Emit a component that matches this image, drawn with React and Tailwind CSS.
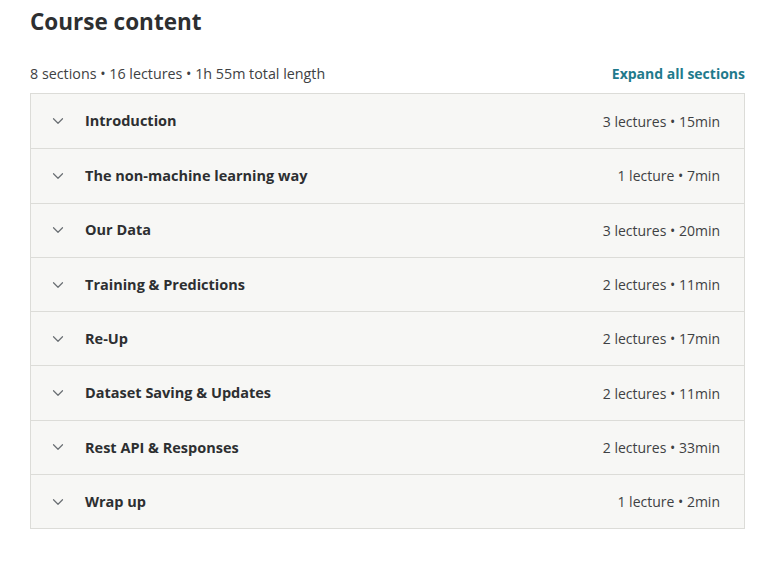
import { ChevronDown } from 'lucide-react';

const sections = [
  { title: 'Introduction', meta: '3 lectures • 15min' },
  { title: 'The non-machine learning way', meta: '1 lecture • 7min' },
  { title: 'Our Data', meta: '3 lectures • 20min' },
  { title: 'Training & Predictions', meta: '2 lectures • 11min' },
  { title: 'Re-Up', meta: '2 lectures • 17min' },
  { title: 'Dataset Saving & Updates', meta: '2 lectures • 11min' },
  { title: 'Rest API & Responses', meta: '2 lectures • 33min' },
  { title: 'Wrap up', meta: '1 lecture • 2min' },
];

const App = () => {
  return (
    <div className="w-[767px] h-[564px] bg-white font-['Open_Sans',sans-serif] text-[#2d2f31]">
      <div className="pl-[30px] pr-[22px] pt-[6px]">
        {/* Header */}
        <h2 className="text-[22.5px] font-bold leading-[32px] text-[#2d2f31]">Course content</h2>

        <div className="mt-[25px] flex items-end justify-between">
          <span className="text-[14.3px] text-[#3e4143] leading-[22px]">
            8 sections • 16 lectures • 1h 55m total length
          </span>
          <button className="text-[14px] font-bold text-[#1f7a8c] leading-[22px]">
            Expand all sections
          </button>
        </div>

        {/* Sections */}
        <div className="mt-[8px] border border-[#dcdcd8] bg-[#f7f7f5]">
          {sections.map((s, i) => (
            <div
              key={s.title}
              className={`flex items-center h-[54.3px] pl-[18px] pr-[24px] ${i > 0 ? 'border-t border-[#dcdcd8]' : ''}`}
            >
              <ChevronDown size={18} strokeWidth={1.6} className="text-[#6a6f73] mr-[18px]" />
              <span className="flex-1 text-[14.5px] font-bold text-[#2d2f31]">{s.title}</span>
              <span className="text-[14px] text-[#3e4143]">{s.meta}</span>
            </div>
          ))}
        </div>
      </div>
    </div>
  );
};

export default App;
